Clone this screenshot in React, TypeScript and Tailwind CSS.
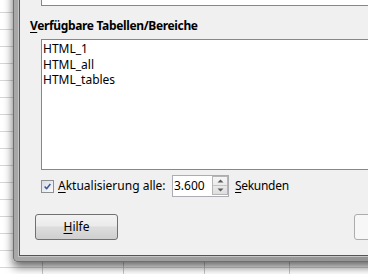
export default function App() {
  return (
    <div className="relative h-[274px] w-[368px] overflow-hidden bg-white font-['Noto_Sans',sans-serif] text-[12px] text-black">
      {/* spreadsheet behind the dialog */}
      <div className="flex h-full bg-[repeating-linear-gradient(180deg,transparent_0px,transparent_12px,#d6d6d6_12px,#d6d6d6_13px,transparent_13px,transparent_17px)]">
        <div className="w-[43px] shrink-0 border-r border-[#c8c8c8]" />
        <div className="w-[81px] shrink-0 border-r border-[#c8c8c8]" />
        <div className="w-[81px] shrink-0 border-r border-[#c8c8c8]" />
        <div className="w-[85px] shrink-0 border-r border-[#c8c8c8]" />
        <div className="flex-1" />
      </div>

      {/* dialog window */}
      <div className="absolute left-[13px] top-[-40px] h-[302px] w-[450px] rounded-b-[4px] border border-[#6e6e6e] bg-[linear-gradient(90deg,#a8a8a8,#8e8e8e)] p-[5px] shadow-[0_5px_10px_rgba(0,0,0,0.6)]">
        <div className="flex h-full flex-col border border-[#555555] bg-[#f0f0f0] shadow-[0_0_0_1px_#c6c6c6]">
          <div className="ml-[21px] mr-[11px] h-[39px] shrink-0 border border-[#828790] bg-white" />

          <div className="ml-[10px] mt-[12px] h-[16px] shrink-0 font-bold leading-[16px] tracking-[-0.35px]">
            <u className="underline-offset-2">V</u>erfügbare Tabellen/Bereiche
          </div>

          <div className="ml-[21px] mr-[11px] mt-[5px] h-[131px] shrink-0 border border-[#828790] bg-white pl-[1px] pt-[1px] leading-[15.5px]">
            <div>HTML_1</div>
            <div>HTML_all</div>
            <div>HTML_tables</div>
          </div>

          <div className="mt-[5px] flex h-[22px] shrink-0 items-center pl-[21px]">
            <div className="h-[13px] w-[13px] shrink-0 border border-[#8e8f8f] bg-[linear-gradient(135deg,#d8dce4,#fbfbfb)] p-[1px]">
              <svg viewBox="0 0 11 11" className="h-full w-full">
                <path d="M2 5.6 L4.4 8.2 L9 2.4" fill="none" stroke="#3a5594" strokeWidth="1.8" strokeLinejoin="round" />
              </svg>
            </div>
            <span className="ml-[4px] w-[114px] shrink-0 leading-[16px]">
              <u className="underline-offset-2">A</u>ktualisierung alle:
            </span>
            <div className="flex h-[22px] w-[57px] shrink-0 border border-[#abadb3] bg-white">
              <span className="flex-1 pl-[1px] leading-[20px]">3.600</span>
              <div className="mb-[1px] flex w-[16px] flex-col border border-[#b5b5b5] bg-[linear-gradient(180deg,#f6f6f6,#dedede)]">
                <div className="flex flex-1 items-center justify-center border-b border-[#c4c4c4]">
                  <svg width="7" height="4" viewBox="0 0 7 4">
                    <path d="M0.5 3.5 L3.5 0.5 L6.5 3.5 Z" fill="#5a5a5a" />
                  </svg>
                </div>
                <div className="flex flex-1 items-center justify-center">
                  <svg width="7" height="4" viewBox="0 0 7 4">
                    <path d="M0.5 0.5 L3.5 3.5 L6.5 0.5 Z" fill="#5a5a5a" />
                  </svg>
                </div>
              </div>
            </div>
            <span className="ml-[6px] leading-[16px] tracking-[-0.3px]">
              <u className="underline-offset-2">S</u>ekunden
            </span>
          </div>

          <div className="mt-[17px] flex shrink-0">
            <button className="ml-[15px] flex h-[26px] w-[83px] items-center justify-center rounded-[3px] border border-[#707070] bg-[linear-gradient(180deg,#f2f2f2_0%,#ebebeb_45%,#dddddd_50%,#cfcfcf_100%)] leading-[16px]">
              <span>
                <u className="underline-offset-2">H</u>ilfe
              </span>
            </button>
            <div className="ml-auto mr-[19px] h-[26px] w-[83px] rounded-[3px] border border-[#acacac] bg-[#f7f7f7]" />
          </div>
        </div>
      </div>
    </div>
  );
}
